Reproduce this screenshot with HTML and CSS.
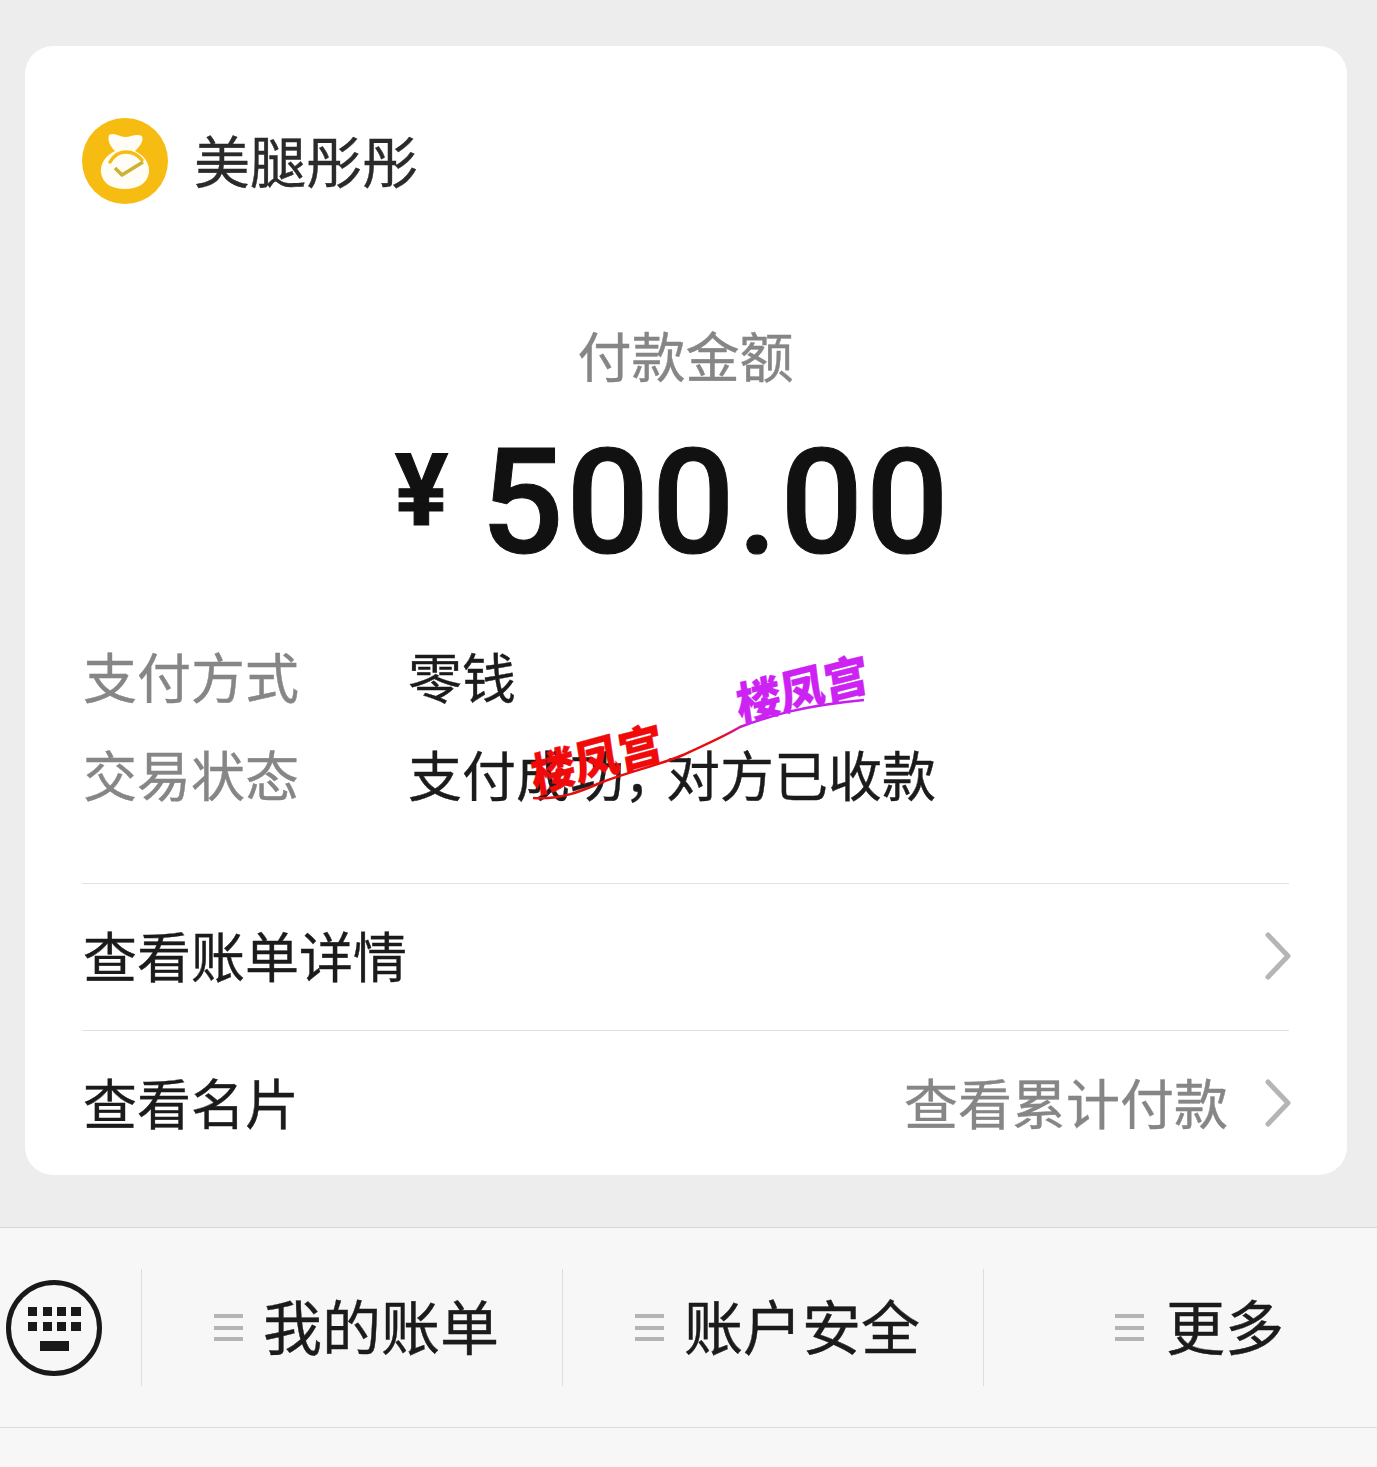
FILE: index.html
```html
<!DOCTYPE html>
<html lang="zh-CN">
	<head>
		<meta charset="UTF-8">
		<title>支付成功</title>
		<link rel="stylesheet" href="styles.css">
	</head>
	<body>
		<div class="card">
			<div class="merchant">
				<svg class="merchant-logo" viewBox="0 0 86 86">
					<circle cx="43" cy="43" r="43" fill="#f7bc12"/>
					<path d="M27 17 C33 14 37 19 43 19 C49 19 54 15 60 18 C62 24 57 29 53 33 C63 38 68 46 67 55 C65 66 55 71 43 71 C30 71 21 66 19 55 C18 46 23 38 33 33 C29 29 25 23 27 17 Z" fill="#fffdf5"/>
					<path d="M28 44 C32 37 38 34 44 34 C51 34 56 37 60 42" stroke="#f7bc12" stroke-width="3.5" fill="none" stroke-linecap="round"/>
					<path d="M33 50 L40 57 L61 44" stroke="#cdb234" stroke-width="3.5" fill="none" stroke-linejoin="round"/>
				</svg>
				<span class="merchant-name">美腿彤彤</span>
			</div>

			<div class="pay-label">付款金额</div>
			<div class="pay-amount"><span class="yen">¥</span>500.00</div>

			<div class="info-rows">
				<div class="info-row">
					<span class="info-label">支付方式</span>
					<span>零钱</span>
				</div>
				<div class="info-row">
					<span class="info-label">交易状态</span>
					<span>支付成功<span class="comma">，</span>对方已收款</span>
				</div>
			</div>

			<div class="link-row">
				<span>查看账单详情</span>
				<svg class="chevron" viewBox="0 0 26 48"><path d="M3 3 L23 24 L3 45"/></svg>
			</div>
			<div class="link-row">
				<span>查看名片</span>
				<span class="link-extra">查看累计付款</span>
				<svg class="chevron" viewBox="0 0 26 48"><path d="M3 3 L23 24 L3 45"/></svg>
			</div>
		</div>

		<div class="menu-bar">
			<div class="keyboard-cell">
				<svg class="keyboard-icon" viewBox="0 0 98 98">
					<circle cx="49" cy="49" r="45.5" fill="none" stroke="#191919" stroke-width="5"/>
					<g fill="#191919">
						<rect x="23" y="28" width="9" height="9"/>
						<rect x="38" y="28" width="9" height="9"/>
						<rect x="52" y="28" width="9" height="9"/>
						<rect x="66" y="28" width="10" height="9"/>
						<rect x="23" y="43" width="9" height="9"/>
						<rect x="38" y="43" width="9" height="9"/>
						<rect x="52" y="43" width="9" height="9"/>
						<rect x="66" y="43" width="10" height="9"/>
						<rect x="35" y="62" width="29" height="10"/>
					</g>
				</svg>
			</div>
			<div class="menu-cell">
				<span class="menu-lines"></span>
				<span class="menu-text">我的账单</span>
			</div>
			<div class="menu-cell">
				<span class="menu-lines"></span>
				<span class="menu-text">账户安全</span>
			</div>
			<div class="menu-cell menu-cell-last">
				<span class="menu-lines"></span>
				<span class="menu-text">更多</span>
			</div>
		</div>

		<!-- watermark stamped over the screenshot -->
		<svg class="watermark" viewBox="0 0 400 180">
			<defs>
				<linearGradient id="swoosh" gradientUnits="userSpaceOnUse" x1="0" y1="0" x2="400" y2="0">
					<stop offset="0.55" stop-color="#e80c0c"/>
					<stop offset="0.62" stop-color="#c81ef0"/>
				</linearGradient>
			</defs>
			<path d="M33 158 C62 160 84 150 100 143 C130 131 160 125 183 115 C205 105 225 96 240 87 C270 76 300 66 364 60" fill="none" stroke="url(#swoosh)" stroke-width="2.5"/>
			<text class="mark mark-red" transform="translate(34 153) rotate(-15) skewX(-6)">楼凤宫</text>
			<text class="mark mark-purple" transform="translate(239 82) rotate(-14) skewX(-6)">楼凤宫</text>
		</svg>
	</body>
</html>
```

FILE: styles.css
```css
html,
body {
    height: 100%;
}

body {
    margin: 0;
    position: relative;
    overflow: hidden;
    background-color: #ededed;
    color: #1b1b1b;
    font-family: "Noto Sans CJK SC", sans-serif;
    font-size: 54px;
    -webkit-text-stroke: 0.4px;
}

.card {
    margin: 46px 30px 0 25px;
    padding: 72px 58px 0 57px;
    height: 1129px;
    box-sizing: border-box;
    background-color: #ffffff;
    border-radius: 28px;
}

.merchant {
    display: flex;
    align-items: center;
    gap: 26px;
    height: 86px;
}

.merchant-logo {
    width: 86px;
    height: 86px;
}

.merchant-name {
    margin-bottom: 6px;
    font-size: 56px;
    color: #2a2a2a;
}

.pay-label {
    margin-top: 116px;
    text-align: center;
    color: #868686;
    line-height: 70px;
}

.pay-amount {
    display: flex;
    justify-content: center;
    align-items: center;
    margin: 33px 0 0 -25px;
    height: 160px;
    font-family: Roboto, sans-serif;
    font-weight: 500;
    font-size: 146px;
    letter-spacing: 2.5px;
    color: #111111;
    -webkit-text-stroke: 1px;
}

.yen {
    margin: -26px 30px 0 0;
    font-size: 100px;
    font-weight: 700;
}

.info-rows {
    margin-top: 43px;
    padding-bottom: 61px;
    padding-left: 1px;
}

.info-row {
    display: flex;
    align-items: center;
    height: 98px;
}

.info-label {
    width: 325px;
    color: #868686;
}

.comma {
    margin-right: -12px;
}

.link-row {
    display: flex;
    align-items: center;
    height: 141px;
    padding: 0 0 5px 1px;
    border-top: 1px solid #e2e2e2;
}

.link-extra {
    margin-left: auto;
    margin-right: 37px;
    color: #868686;
}

.chevron {
    margin: 3px -2px 0 auto;
    width: 26px;
    height: 48px;
    fill: none;
    stroke: #b5b5b5;
    stroke-width: 5;
    stroke-linecap: round;
    stroke-linejoin: round;
}

.link-extra + .chevron {
    margin-left: 0;
}

.menu-bar {
    display: flex;
    margin-top: 52px;
    height: 199px;
    background-color: #f7f7f7;
    border-top: 1px solid #d6d6d6;
    border-bottom: 1px solid #dcdcdc;
    font-size: 59px;
    box-shadow: 0 41px 0 #f7f7f7;
}

.keyboard-cell {
    display: flex;
    align-items: center;
    width: 141px;
    padding-left: 5px;
    box-sizing: border-box;
}

.keyboard-icon {
    width: 98px;
    height: 98px;
}

.menu-cell {
    display: flex;
    align-items: center;
    gap: 20px;
    width: 421px;
    padding-left: 73px;
    box-sizing: border-box;
    position: relative;
}

.menu-cell::before {
    content: "";
    position: absolute;
    left: 0;
    top: 41px;
    bottom: 41px;
    width: 1px;
    background-color: #dddddd;
}

.menu-cell-last {
    flex: 1;
    padding-left: 132px;
    gap: 22px;
}

.menu-text {
    margin-bottom: 6px;
}

.menu-lines {
    width: 29px;
    height: 27px;
    box-sizing: border-box;
    border-top: 4px solid #b4b4b4;
    border-bottom: 4px solid #b4b4b4;
    position: relative;
}

.menu-lines::after {
    content: "";
    position: absolute;
    left: 0;
    right: 0;
    top: 8px;
    height: 4px;
    background-color: #b4b4b4;
}

.watermark {
    position: absolute;
    left: 500px;
    top: 640px;
    width: 400px;
    height: 180px;
    overflow: visible;
}

.mark {
    font-family: "Noto Sans CJK SC", sans-serif;
    font-weight: 900;
    font-size: 45px;
    stroke-width: 0.4px;
}

.mark-red {
    fill: #f00a0a;
    stroke: #f00a0a;
}

.mark-purple {
    fill: #cc22f2;
    stroke: #cc22f2;
}
```
